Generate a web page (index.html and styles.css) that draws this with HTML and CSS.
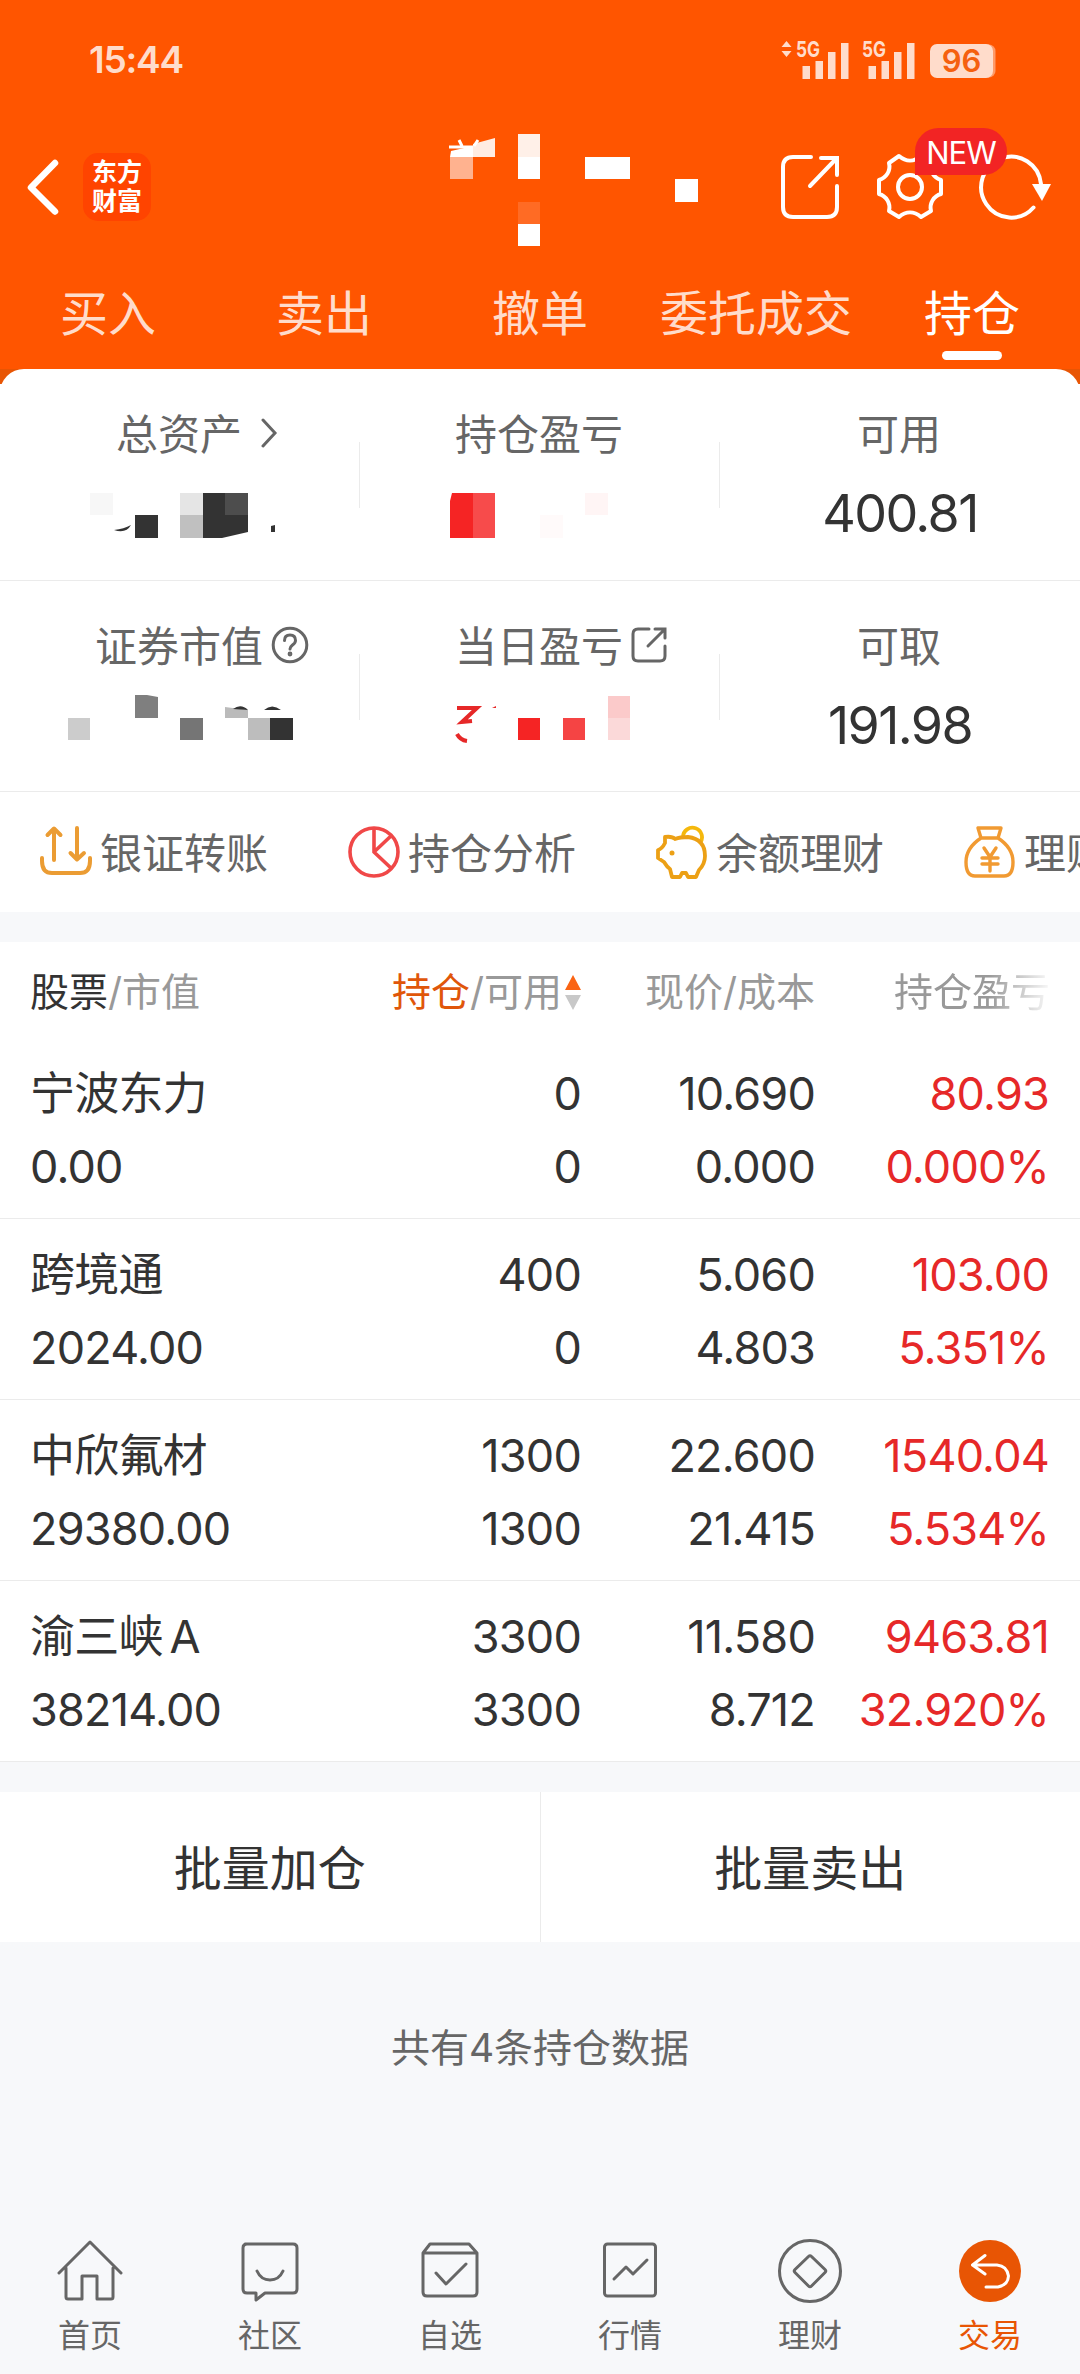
FILE: index.html
```html
<!DOCTYPE html>
<html lang="zh-CN">
<head>
  <meta charset="UTF-8">
  <meta name="viewport" content="width=device-width, initial-scale=1.0">
  <title>持仓</title>
  <link rel="stylesheet" href="styles.css">
</head>
<body>

  <header class="header">
    <div class="status">
      <span class="time">15:44</span>
      <svg class="signals" width="136" height="44" viewBox="0 0 136 44">
        <path d="M5.500 6l5 6h-10zM5.500 22l5-6h-10z"/>
        <text x="15" y="22" textLength="24" lengthAdjust="spacingAndGlyphs">5G</text>
        <path d="M21.500 31h7.500v13h-7.500zM34.500 26h7.500v18h-7.500zM47 17h7.500v27H47zM60 8h7.500v36H60z"/>
        <text x="81" y="22" textLength="24" lengthAdjust="spacingAndGlyphs">5G</text>
        <path d="M87.500 31h7.500v13h-7.500zM100.500 26h7.500v18h-7.500zM113 17h7.500v27H113zM126 8h7.500v36H126z"/>
      </svg>
      <span class="battery">96</span>
    </div>

    <div class="titlebar">
      <svg class="back" width="36" height="60" viewBox="0 0 36 60" fill="none" stroke="#fff" stroke-width="6.500" stroke-linecap="round" stroke-linejoin="round">
        <path d="M30 6L6 30.500 30 54.500"/>
      </svg>
      <div class="logo">东方<br>财富</div>
      <svg class="account" width="260" height="134" viewBox="445 120 260 134">
        <rect x="450" y="157" width="23" height="22" fill="#ffb28f"/>
        <path d="M451 151l22-5v11h-23z" fill="#fff"/>
        <path d="M473 144l22-6v19h-22z" fill="#ffece2"/>
        <path d="M449 147h24M459 140l3 6M478 140l-4 6" stroke="#fff" stroke-width="3" fill="none"/>
        <rect x="518" y="134" width="22" height="23" fill="#fff0e8"/>
        <rect x="518" y="157" width="22" height="22" fill="#fff"/>
        <rect x="518" y="202" width="22" height="22" fill="#ff6b24"/>
        <rect x="518" y="224" width="22" height="22" fill="#fff"/>
        <rect x="585" y="157" width="45" height="22" fill="#fff"/>
        <rect x="675" y="179" width="23" height="23" fill="#fff"/>
      </svg>
      <svg class="share" width="62" height="68" viewBox="0 0 62 68" fill="none" stroke="#fff" stroke-width="4" stroke-linecap="round">
        <path d="M32 5H14Q4 5 4 15v40q0 10 10 10h34q10 0 10-10V34M42 6h16v17M56 8L31 34"/>
      </svg>
      <div class="settings">
        <svg width="72" height="72" viewBox="0 0 72 72" fill="none" stroke="#fff" stroke-width="4" stroke-linejoin="round">
          <path d="M25 5C32 11 40 11 47 5L57 12C55 20 60 27 67 29V43C60 45 55 52 57 60L47 66C40 60 32 60 25 66L15 60C17 52 12 45 5 43V29C12 27 17 20 15 12Z"/>
          <circle cx="36" cy="36" r="12"/>
        </svg>
        <span class="badge">NEW</span>
      </div>
      <svg class="refresh" width="78" height="72" viewBox="0 0 78 72">
        <path d="M65 33A30 30.500 0 1 0 57.500 56.500" fill="none" stroke="#fff" stroke-width="4" stroke-linecap="round"/>
        <path d="M56 33h19l-9 17z" fill="#fff"/>
      </svg>
    </div>

    <nav class="tabs">
      <a>买入</a>
      <a>卖出</a>
      <a>撤单</a>
      <a>委托成交</a>
      <a class="active">持仓</a>
    </nav>
  </header>

  <div class="assets-wrap">
    <section class="assets">
      <div class="asset">
        <div class="label">总资产
          <svg class="hang chevron" width="18" height="30" viewBox="0 0 18 30" fill="none" stroke="#666" stroke-width="3" stroke-linecap="round"><path d="M3 2l12 13L3 28"/></svg>
        </div>
        <svg class="masked" width="360" height="60" viewBox="0 483 360 60">
          <rect x="90" y="493" width="23" height="22" fill="#f7f7f7"/>
          <path d="M114 530q10-1 17-5-5 9-17 5z" fill="#333"/>
          <rect x="135" y="515" width="23" height="23" fill="#333"/>
          <rect x="180" y="493" width="23" height="22" fill="#e5e5e5"/>
          <rect x="180" y="515" width="23" height="23" fill="#c0c0c0"/>
          <path d="M203 493h22v22h23v17l-26 6h-19z" fill="#333"/>
          <rect x="225" y="493" width="23" height="22" fill="#4d4d4d"/>
          <path d="M271 526l4-1v7h-4z" fill="#333"/>
        </svg>
      </div>
      <div class="asset">
        <div class="label">持仓盈亏</div>
        <svg class="masked" width="360" height="60" viewBox="360 483 360 60">
          <path d="M452 493h21v45h-23v-37z" fill="#f52424"/>
          <rect x="473" y="493" width="22" height="45" fill="#f74b4b"/>
          <rect x="540" y="515" width="23" height="23" fill="#fffafa"/>
          <rect x="585" y="493" width="23" height="22" fill="#fff5f5"/>
        </svg>
      </div>
      <div class="asset">
        <div class="label">可用</div>
        <div class="value">400.81</div>
      </div>
    </section>
    <section class="assets">
      <div class="asset">
        <div class="label">证券市值
          <svg class="hang help" width="38" height="38" viewBox="0 0 38 38" fill="none" stroke="#666" stroke-width="3" stroke-linecap="round">
            <circle cx="19" cy="19" r="16.800"/>
            <path d="M13.500 14.500q0-5.500 5.500-5.500t5.500 5.500q0 2.500-3 4.500-2.500 2-2.500 4"/>
            <circle cx="19" cy="28" r=".9" fill="#666"/>
          </svg>
        </div>
        <svg class="masked" width="360" height="60" viewBox="0 694 360 60">
          <rect x="68" y="717" width="22" height="22" fill="#ccc"/>
          <path d="M135 694h12l11 2v21h-23z" fill="#7f7f7f"/>
          <rect x="180" y="717" width="23" height="22" fill="#757575"/>
          <path d="M225 706l23 3v8h-23z" fill="#bbb"/>
          <path d="M233 708q8-6 15 1zM264 709q8-7 17 0z" fill="#333"/>
          <rect x="248" y="717" width="22" height="22" fill="#bdbdbd"/>
          <rect x="270" y="717" width="23" height="22" fill="#333"/>
        </svg>
      </div>
      <div class="asset">
        <div class="label">当日盈亏
          <svg class="hang jump" width="36" height="38" viewBox="0 0 36 38" fill="none" stroke="#666" stroke-width="3" stroke-linecap="round">
            <path d="M18 3H7Q2 3 2 8v22q0 5 5 5h22q5 0 5-5V20M24 3h10v9M33 4L17 20"/>
          </svg>
        </div>
        <svg class="masked" width="360" height="60" viewBox="360 694 360 60">
          <path d="M457 707h20l-15 14 10-1M457 733q3 6 10 7" fill="none" stroke="#e62828" stroke-width="4"/>
          <path d="M492 707l4-2v2z" fill="#e62828"/>
          <rect x="518" y="717" width="22" height="22" fill="#f52424"/>
          <rect x="563" y="717" width="22" height="22" fill="#f54444"/>
          <rect x="608" y="695" width="22" height="22" fill="#fbcaca"/>
          <rect x="608" y="717" width="22" height="22" fill="#fbd9d9"/>
        </svg>
      </div>
      <div class="asset">
        <div class="label">可取</div>
        <div class="value">191.98</div>
      </div>
    </section>

    <section class="actions">
      <a>
        <svg width="52" height="54" viewBox="0 0 52 54" fill="none" stroke="#eb9c33" stroke-width="4" stroke-linecap="round" stroke-linejoin="round">
          <path d="M14 35V4M7.500 10L14 3.500 20.500 10M37 3v31M30.500 28l6.500 6.500 7-6.500M2 33v3q0 12 10 12h28q10 0 10-12v-3"/>
        </svg>
        <span>银证转账</span>
      </a>
      <a>
        <svg width="52" height="54" viewBox="0 0 52 54" fill="none" stroke="#f04848" stroke-width="3.600">
          <circle cx="26" cy="27" r="24"/>
          <path d="M26 3v24l18 17M26 27L44 10"/>
        </svg>
        <span>持仓分析</span>
      </a>
      <a>
        <svg width="52" height="54" viewBox="0 0 52 54" fill="none" stroke="#eca015" stroke-width="3.800" stroke-linejoin="round">
          <path d="M27 12a9.500 9.500 0 1 1 17 6" stroke="#f5b80c"/>
          <path d="M9 12q7-1 10 2 5-2 13-2 17 2 17 19 0 8-6 14l-3 7h-8l-2-4h-4l-2 4h-8l-2-8q-3-2-6-7l-6-4v-8q4-1 7-7Z"/>
          <circle cx="16" cy="28" r="2.500" fill="#eca015" stroke="none"/>
        </svg>
        <span>余额理财</span>
      </a>
      <a>
        <svg width="52" height="54" viewBox="0 0 52 54" fill="none" stroke="#f19a32" stroke-width="3.400" stroke-linecap="round" stroke-linejoin="round">
          <path d="M14 3h23l-3 10H17zM17 13Q2 23 2 37q0 14 9 14h29q9 0 9-14Q49 23 34 13M20 23l6 9 6-9M18 33h16M18 39h16M26 32v14"/>
        </svg>
        <span>理财</span>
      </a>
    </section>
  </div>

  <main class="holdings">
    <div class="row head">
      <span><b>股票</b>/市值</span>
      <span><em>持仓</em>/可用<svg class="sort" width="16" height="36" viewBox="0 0 16 36"><path d="M8 0l8 15H0z" fill="#fa6414"/><path d="M0 20h16L8 35z" fill="#c8c8c8"/></svg></span>
      <span>现价/成本</span>
      <span class="fade">持仓盈亏</span>
    </div>
    <div class="row">
      <span>宁波东力<br>0.00</span>
      <span>0<br>0</span>
      <span>10.690<br>0.000</span>
      <span class="up">80.93<br>0.000%</span>
    </div>
    <div class="row">
      <span>跨境通<br>2024.00</span>
      <span>400<br>0</span>
      <span>5.060<br>4.803</span>
      <span class="up">103.00<br>5.351%</span>
    </div>
    <div class="row">
      <span>中欣氟材<br>29380.00</span>
      <span>1300<br>1300</span>
      <span>22.600<br>21.415</span>
      <span class="up">1540.04<br>5.534%</span>
    </div>
    <div class="row">
      <span class="narrow">渝三峡 A<br>38214.00</span>
      <span>3300<br>3300</span>
      <span>11.580<br>8.712</span>
      <span class="up">9463.81<br>32.920%</span>
    </div>
  </main>

  <div class="batch">
    <a>批量加仓</a>
    <a>批量卖出</a>
  </div>

  <p class="count">共有4条持仓数据</p>

  <nav class="bottom">
    <a>
      <svg width="68" height="68" viewBox="0 0 68 68"><path d="M3 37L34 6l31 31M10 32v29q0 2 2 2h14V40h15v23h14q2 0 2-2V32"/></svg>
      首页
    </a>
    <a>
      <svg width="68" height="68" viewBox="0 0 68 68"><path d="M9 8h48q4 0 4 4v41q0 4-4 4H29l-9 7v-7H11q-4 0-4-4V12q0-4 4-4M21 35q4 9 13 9t13-9"/></svg>
      社区
    </a>
    <a>
      <svg width="68" height="68" viewBox="0 0 68 68"><path d="M7 17l7-9h39l8 9v39q0 4-4 4H11q-4 0-4-4zM7 17h54M20 37l10 11 20-20"/></svg>
      自选
    </a>
    <a>
      <svg width="68" height="68" viewBox="0 0 68 68"><rect x="8.500" y="8" width="51" height="52" rx="3"/><path d="M18 43l12-12 7 7 14-14"/></svg>
      行情
    </a>
    <a>
      <svg width="68" height="68" viewBox="0 0 68 68"><circle cx="34" cy="35" r="30.500"/><path d="M32.500 20.500q1.500-1.500 3 0L49 33.500q1.500 1.500 0 3L35.500 50q-1.500 1.500-3 0L19 36.500q-1.500-1.500 0-3z"/></svg>
      理财
    </a>
    <a class="active">
      <svg width="68" height="68" viewBox="0 0 68 68"><circle class="disc" cx="34" cy="35" r="31"/><path class="turn" d="M29 19.500L16.500 29 29 38M17 29h24q10 1 11.500 11Q52 49 42 51H30"/></svg>
      交易
    </a>
  </nav>

</body>
</html>
```

FILE: styles.css
```css
* {
  box-sizing: border-box;
}

body {
  margin: 0;
  width: 1080px;
  min-height: 2374px;
  background: #f7f8fa;
  color: #333;
  font-family: "Inter", "Noto Sans CJK SC", sans-serif;
  font-weight: 400;
  overflow-x: hidden;
}

svg {
  display: block;
  flex: none;
}

.header {
  height: 369px;
  background: #ff5500;
  color: #fff;
}

/* status bar */
.status {
  display: flex;
  align-items: center;
  height: 120px;
  padding: 0 84px 0 89px;
  color: #ffdccb;
}

.time {
  margin: -2px auto 0 0;
  font-size: 37px;
  font-weight: 600;
  letter-spacing: -1.2px;
}

.signals {
  margin: -7px 13px 0 0;
  fill: #ffdccb;
  font-size: 22px;
  font-weight: 700;
}

.battery {
  width: 63px;
  height: 34px;
  margin: 2px 3px 0 0;
  border-radius: 7px;
  background: #ffdccb;
  box-shadow: 3px 0 0 -0.5px #ff9a68;
  color: #f5600f;
  font-size: 31px;
  font-weight: 600;
  line-height: 34px;
  text-align: center;
}

/* title bar */
.titlebar {
  display: flex;
  align-items: center;
  height: 134px;
  padding-left: 25px;
}

.logo {
  width: 68px;
  height: 68px;
  margin-left: 22px;
  padding-top: 5px;
  border-radius: 15px;
  background: #ff4400;
  font-size: 25px;
  font-weight: 700;
  line-height: 29px;
  text-align: center;
}

.account {
  margin-left: 294px;
}

.share {
  margin-left: 74px;
  margin-top: -2px;
}

.settings {
  position: relative;
  margin-left: 33px;
}

.badge {
  position: absolute;
  z-index: 1;
  left: 41px;
  top: -23px;
  width: 92px;
  height: 47px;
  border-radius: 24px 24px 24px 0;
  background: #f22424;
  font-size: 31px;
  line-height: 49px;
  letter-spacing: -1px;
  text-align: center;
}

.refresh {
  margin-left: 30px;
}

/* trade tabs */
.tabs {
  display: flex;
}

.tabs a {
  flex: 1;
  padding-top: 36px;
  color: #ffdccb;
  font-size: 48px;
  line-height: 48px;
  text-align: center;
}

.tabs .active {
  color: #fff;
}

.tabs .active::after {
  content: "";
  display: block;
  width: 60px;
  height: 9px;
  margin: 13px auto 0;
  border-radius: 5px;
  background: #fff;
}

/* assets */
.assets-wrap {
  background: linear-gradient(#e85504 15px, #fff 15px);
}

.assets {
  display: flex;
  height: 211.5px;
  background: #fff;
  border-bottom: 1px solid #ebebeb;
}

.assets:first-child {
  border-radius: 24px 24px 0 0;
}

.asset {
  position: relative;
  display: flex;
  flex-direction: column;
  align-items: center;
  width: 360px;
  padding-top: 42px;
}

.asset + .asset::before {
  content: "";
  position: absolute;
  left: -1px;
  top: 73px;
  width: 1px;
  height: 66px;
  background: #ebebeb;
}

.label {
  position: relative;
  height: 48px;
  margin-right: 2px;
  color: #666;
  font-size: 42px;
  line-height: 48px;
}

.hang {
  position: absolute;
  left: 100%;
}

.chevron {
  top: 7px;
  margin-left: 18px;
}

.help {
  top: 3px;
  margin-left: 8px;
}

.jump {
  top: 3px;
  margin-left: 8px;
}

.value {
  margin-top: 25px;
  font-size: 52px;
  line-height: 60px;
  letter-spacing: -1.6px;
}

.masked {
  margin-top: 24px;
}

.actions {
  display: flex;
  gap: 79px;
  height: 120px;
  padding-left: 40px;
  overflow: hidden;
  background: #fff;
}

.actions a {
  display: flex;
  flex: none;
  align-items: center;
  gap: 8px;
  width: 229px;
  color: #666;
  font-size: 42px;
  white-space: nowrap;
}

.actions span {
  padding-bottom: 3px;
}

/* holdings */
.holdings {
  margin-top: 30px;
  background: #fff;
}

.row {
  display: grid;
  grid-template-columns: 351px 200px 234px 234px;
  height: 181px;
  padding: 19px 0 0 30px;
  border-bottom: 1px solid #ebebeb;
  font-size: 45px;
  line-height: 73px;
  letter-spacing: -0.8px;
}

.row span {
  text-align: right;
  white-space: nowrap;
}

.row span:first-child {
  text-align: left;
}

.row .narrow {
  word-spacing: -5px;
}

.row .up {
  color: #e62828;
}

.head {
  height: 96px;
  padding-top: 13px;
  border: 0;
  color: #999;
  font-size: 39px;
  letter-spacing: 0;
}

.head b {
  color: #333;
  font-weight: 400;
}

.head em {
  color: #e0560a;
  font-style: normal;
}

.head .sort {
  display: inline-block;
  margin-left: 3px;
  vertical-align: -5px;
}

.head .fade {
  margin-left: 79px;
  text-align: left;
  overflow: hidden;
  -webkit-mask-image: linear-gradient(90deg, #000 95px, transparent 160px);
  mask-image: linear-gradient(90deg, #000 95px, transparent 160px);
}

/* batch buttons */
.batch {
  display: flex;
  height: 150px;
  margin-top: 30px;
  background: #fff;
}

.batch a {
  flex: 1;
  font-size: 48px;
  line-height: 154px;
  text-align: center;
}

.batch a + a {
  border-left: 1px solid #ebebeb;
}

.count {
  margin: 76px 0 0;
  color: #666;
  font-size: 39px;
  line-height: 60px;
  text-align: center;
}

/* bottom nav */
.bottom {
  display: flex;
  margin-top: 158px;
}

.bottom a {
  display: flex;
  flex: 1;
  flex-direction: column;
  align-items: center;
  gap: 10px;
  color: #666;
  font-size: 32px;
  line-height: 44px;
}

.bottom svg {
  fill: none;
  stroke: #666;
  stroke-width: 3;
  stroke-linecap: round;
  stroke-linejoin: round;
}

.bottom .active {
  color: #e85504;
}

.bottom .disc {
  fill: #e85504;
  stroke: none;
}

.bottom .turn {
  stroke: #fff;
}
```
